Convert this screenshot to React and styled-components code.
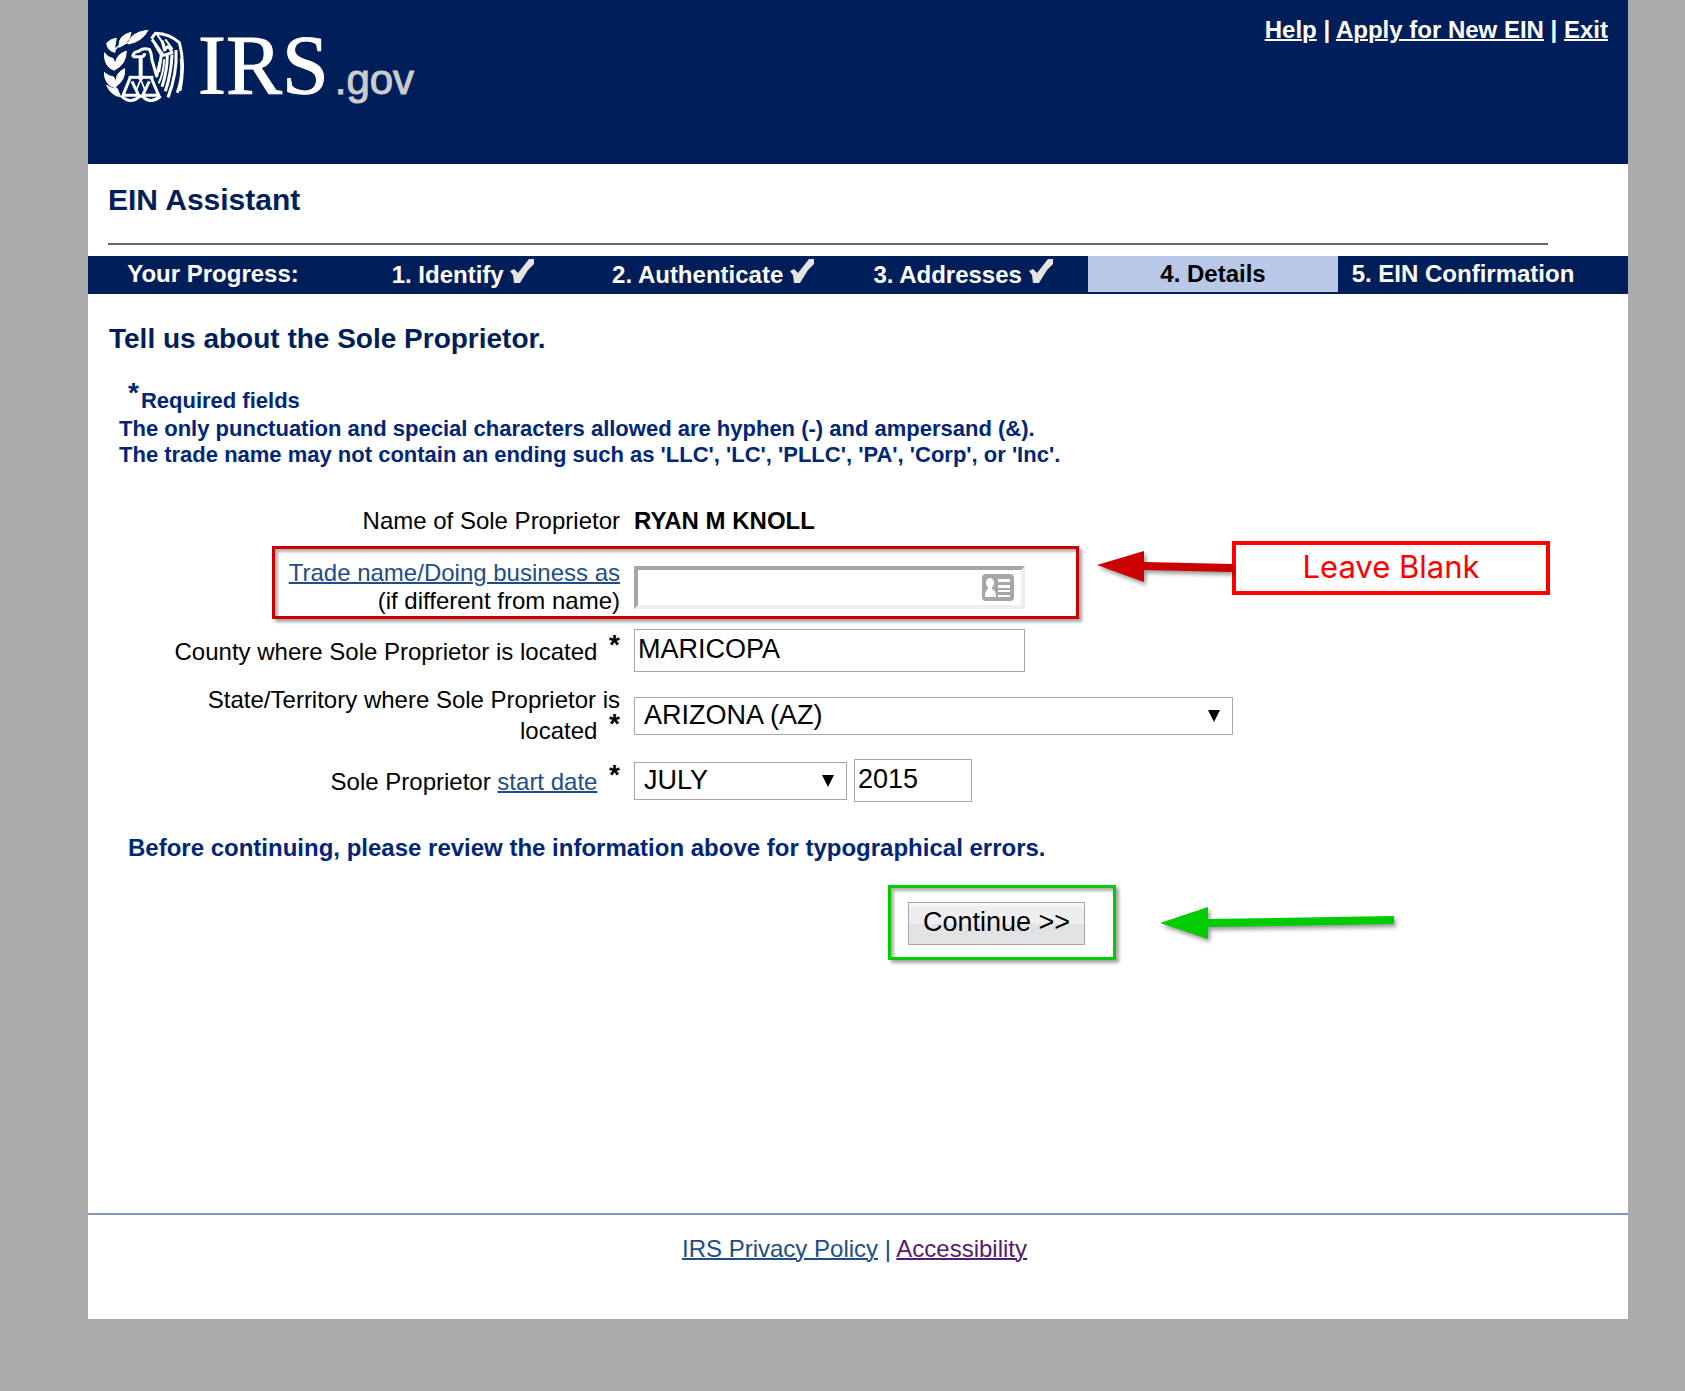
import styled, { createGlobalStyle } from "styled-components";

const NAVY = "#001e5a";
const TEXT_BLUE = "#00267a";
const LINK_BLUE = "#204d87";
const VISITED = "#551a72";
const RED = "#cc0000";
const GREEN = "#00cc00";

const GlobalStyle = createGlobalStyle`
    *, *::before, *::after {
        box-sizing: border-box;
    }

    body {
        margin: 0;
        background: #ababab;
        color: #000;
        font-family: "Liberation Sans", Arial, Helvetica, sans-serif;
        font-size: 24px;
        line-height: 28px;
    }
`

const Page = styled.div`
    margin: 0 57px 71px 88px;
    background: #fff;
`

const Header = styled.header`
    display: flex;
    justify-content: space-between;
    align-items: flex-start;
    min-height: 164px;
    padding: 0 20px 0 16px;
    background: ${NAVY};
    color: #fff;
`

const Logo = styled.a`
    display: flex;
    align-items: baseline;
    padding-top: 18px;
    color: #fff;
    text-decoration: none;
`

const Emblem = styled.svg`
    align-self: flex-start;
    width: 80px;
    height: 72px;
    margin: 12px 14px 0 0;
`

const LogoName = styled.span`
    font-family: "Liberation Serif", "Times New Roman", serif;
    font-size: 84px;
    line-height: 96px;
    -webkit-text-stroke: 1px #fff;
`

const LogoSuffix = styled.span`
    margin-left: 6px;
    color: #ccc;
    font-size: 42px;
    line-height: 48px;
    -webkit-text-stroke: 1px #ccc;
`

const TopLinks = styled.nav`
    padding-top: 16px;
    font-weight: 700;
`

const TextLink = styled.a`
    color: ${(props) => props.$color || LINK_BLUE};
    text-decoration: underline;
    text-decoration-thickness: 2px;
`

const PageTitle = styled.h1`
    margin: 0 80px 11px 20px;
    padding: 19px 0 26px;
    border-bottom: 2px solid #686868;
    color: ${NAVY};
    font-size: 30px;
    line-height: 34px;
`

const Progress = styled.ol`
    display: grid;
    grid-template-columns: repeat(6, 1fr);
    margin: 0;
    padding: 0 40px 0 0;
    list-style: none;
    background: ${NAVY};
    border-bottom: 2px solid ${NAVY};
`

const Step = styled.li`
    display: flex;
    align-items: center;
    justify-content: center;
    height: 36px;
    background: ${(props) => (props.$active ? "#bac8e8" : "transparent")};
    color: ${(props) => (props.$active ? "#000" : "#fff")};
    font-weight: 700;
    white-space: nowrap;
`

const CheckMark = styled.svg`
    width: 24px;
    height: 24px;
`

const SectionTitle = styled.h2`
    margin: 0;
    padding: 29px 20px 0 21px;
    color: ${NAVY};
    font-size: 28px;
    line-height: 32px;
`

const Notes = styled.div`
    padding: 28px 20px 39px 31px;
    color: ${TEXT_BLUE};
    font-size: 22px;
    font-weight: 700;
    line-height: 26px;
`

const NoteLine = styled.p`
    margin: 0;
    padding: ${(props) => (props.$required ? "0 0 2px 9px" : "0")};
`

const Star = styled.span`
    margin: ${(props) => (props.$spaced ? "0 0 0 5px" : "0 2px 0 0")};
    font-size: 28px;
    font-weight: 700;
    line-height: 20px;
    vertical-align: 6px;
`

const Form = styled.form`
    padding-left: 72px;
`

const Rows = styled.div`
    display: flex;
    flex-direction: column;
    gap: 14px;
`

const Row = styled.div`
    position: relative;
    display: grid;
    grid-template-columns: 460px 1fr;
    align-items: center;
    column-gap: 14px;
    padding-bottom: ${(props) => (props.$loose ? "10px" : "0")};
`

const Label = styled.label`
    text-align: right;
`

const Fields = styled.div`
    display: flex;
    align-items: center;
    gap: 7px;
`

const TextInput = styled.input`
    width: ${(props) => props.$width};
    height: 43px;
    padding: 0 3px 2px;
    border: 1px solid #a6a6a6;
    border-radius: 0;
    background: #fff;
    color: #000;
    font-family: inherit;
    font-size: 27px;
`

const InsetInput = styled(TextInput)`
    display: block;
    border: 4px solid;
    border-color: #a6a6a6 #eee #eee #a6a6a6;
    outline: none;
`

const InputWithIcon = styled.div`
    position: relative;
`

const CardIcon = styled.svg`
    position: absolute;
    top: 8px;
    right: 11px;
    width: 32px;
    height: 27px;
`

const SelectBox = styled.div`
    position: relative;
    width: ${(props) => props.$width};
`

const Select = styled.select`
    display: block;
    width: 100%;
    height: 38px;
    padding: 0 36px 2px 9px;
    appearance: none;
    border: 1px solid #a6a6a6;
    border-radius: 0;
    background: #fff;
    color: #000;
    font-family: inherit;
    font-size: 27px;
`

const SelectArrow = styled.svg`
    position: absolute;
    top: 13px;
    right: 13px;
    width: 12px;
    height: 12px;
    pointer-events: none;
`

const Review = styled.p`
    margin: 32px 0 40px -32px;
    color: ${TEXT_BLUE};
    font-weight: 700;
`

const Actions = styled.div`
    position: relative;
    width: max-content;
    margin-left: 748px;
`

const ContinueButton = styled.button`
    display: block;
    height: 43px;
    padding: 0 14px 3px;
    border: 1px solid #a6a6a6;
    border-radius: 0;
    background: linear-gradient(#fafafa 0 3px, #eeeeee 3px 50%, #e2e3e5 50%);
    color: #000;
    font-family: inherit;
    font-size: 27px;
`

// Frames and arrows that are laid over the form
const Highlight = styled.div`
    position: absolute;
    inset: ${(props) => props.$inset};
    width: ${(props) => props.$width};
    border: 3px solid ${(props) => props.$color};
    box-shadow: 3px 3px 3px rgba(0, 0, 0, 0.35), inset 3px 3px 3px rgba(0, 0, 0, 0.3);
    pointer-events: none;
`

const Callout = styled.div`
    position: absolute;
    top: -18px;
    left: 937px;
    display: flex;
    align-items: flex-start;
`

const CalloutText = styled.div`
    width: 318px;
    padding: 3px 0 5px;
    border: 4px solid #ff0000;
    background: #fff;
    color: #ff0000;
    font-family: Inter, "Liberation Sans", sans-serif;
    font-size: 31px;
    font-weight: 400;
    line-height: 38px;
    text-align: center;
`

const RedArrow = styled.svg`
    width: 135px;
    height: 54px;
    overflow: visible;
    filter: drop-shadow(2px 3px 2px rgba(0, 0, 0, 0.4));
`

const GreenArrow = styled.svg`
    position: absolute;
    top: 5px;
    left: 252px;
    width: 236px;
    height: 34px;
    overflow: visible;
    filter: drop-shadow(2px 3px 2px rgba(0, 0, 0, 0.4));
`

const Footer = styled.footer`
    margin-top: 268px;
    padding: 20px 7px 56px 0;
    border-top: 2px solid #8296b6;
    color: ${LINK_BLUE};
    text-align: center;
`

const EagleEmblem = () => (
    <Emblem viewBox="72 90 240 216" aria-hidden="true">
        <g fill="#fff" stroke="#fff" strokeWidth="3">
            <path d="M80 130 Q92 116 109 115 Q103 135 105 157 Q82 152 80 130Z" />
            <path d="M118 142 Q112 108 153 97 Q149 128 118 142Z" />
            <path d="M145 132 Q146 100 204 90 Q188 124 145 132Z" />
            <path d="M73 158 Q82 172 100 176 Q108 192 104 211 Q72 202 73 158Z" />
            <path d="M107 208 Q100 166 139 153 Q138 192 107 208Z" />
            <path d="M72 217 Q88 230 101 231 Q110 246 108 263 Q76 260 72 217Z" />
            <path d="M109 258 Q102 220 134 206 Q136 240 109 258Z" />
            <path d="M80 256 Q96 268 112 266 L122 290 Q94 288 80 256Z" />
        </g>
        <g fill="none" stroke="#fff" strokeWidth="9" strokeLinejoin="round">
            <path d="M104 150 L118 136 L150 126" strokeWidth="4" />
            <path d="M158 170 Q160 156 176 154 Q188 142 208 148 Q214 158 216 180 L230 228 L240 186" />
            <path d="M158 170 H184 Q194 170 194 160" />
            <path d="M182 172 V240" strokeWidth="12" />
            <path d="M146 232 H220" />
            <path d="M150 234 L129 286 H176 L156 244" />
            <path d="M214 234 L236 286 H188 L208 244" />
            <path d="M182 238 L170 268 M182 238 L194 268" strokeWidth="5" />
            <path d="M124 288 Q152 314 178 290 Q184 286 188 290 Q212 314 242 288" />
            <path d="M214 116 L226 100 Q270 102 298 128 Q316 190 300 272" />
            <path d="M216 118 L250 166 L276 158 Q270 142 262 140 L254 150 L246 122" />
            <path d="M230 102 L254 136 M256 118 L278 148" strokeWidth="6" />
            <path d="M226 134 L244 164 L236 216" />
            <path d="M262 164 Q262 212 246 260" />
            <path d="M276 164 Q274 220 256 274" />
            <path d="M288 150 Q292 220 264 292" />
            <path d="M304 176 Q310 230 292 278" />
            <path d="M252 178 Q252 216 236 250" strokeWidth="6" />
        </g>
    </Emblem>
)

const Check = () => (
    <CheckMark viewBox="0 0 24 24" role="img" aria-label="completed">
        <path d="M0 12 L4 10 L8 14 L19 0 H24 V5 L18 11 L10 24 H4 L3 16Z" fill="#e4e4e4" />
    </CheckMark>
)

const ContactCard = () => (
    <CardIcon viewBox="0 0 32 27" aria-hidden="true">
        <rect width="32" height="27" rx="4" fill="#a6a6a6" />
        <g fill="#fff">
            <ellipse cx="8" cy="9" rx="4" ry="5" />
            <path d="M6 12 H10 V15 Q14 16 14 23 H3 Q3 16 6 15Z" />
            <path d="M16 5 H28 V8 H16Z M16 11 H28 V14 H16Z M16 16 H28 V18 H16Z M16 21 H28 V23 H16Z" />
        </g>
    </CardIcon>
)

const DownArrow = () => (
    <SelectArrow viewBox="0 0 12 12" aria-hidden="true">
        <path d="M0 0 H12 L6 12Z" />
    </SelectArrow>
)

const steps = [
    { name: "1. Identify", done: true },
    { name: "2. Authenticate", done: true },
    { name: "3. Addresses", done: true },
    { name: "4. Details", active: true },
    { name: "5. EIN Confirmation" },
]

const App = () => {
    return (
        <>
            <GlobalStyle />
            <Page>
                <Header>
                    <Logo href="#home">
                        <EagleEmblem />
                        <LogoName>IRS</LogoName>
                        <LogoSuffix>.gov</LogoSuffix>
                    </Logo>
                    <TopLinks>
                        <TextLink $color="#fff" href="#help">Help</TextLink>
                        {" | "}
                        <TextLink $color="#fff" href="#apply">Apply for New EIN</TextLink>
                        {" | "}
                        <TextLink $color="#fff" href="#exit">Exit</TextLink>
                    </TopLinks>
                </Header>
                <main>
                    <PageTitle>EIN Assistant</PageTitle>
                    <Progress>
                        <Step>Your Progress:</Step>
                        {steps.map((step) => (
                            <Step key={step.name} $active={step.active} aria-current={step.active ? "step" : undefined}>
                                <span>
                                    {step.name}
                                    {step.done && <> <Check /></>}
                                </span>
                            </Step>
                        ))}
                    </Progress>
                    <SectionTitle>Tell us about the Sole Proprietor.</SectionTitle>
                    <Notes>
                        <NoteLine $required><Star>*</Star>Required fields</NoteLine>
                        <NoteLine>The only punctuation and special characters allowed are hyphen (-) and ampersand (&amp;).</NoteLine>
                        <NoteLine>The trade name may not contain an ending such as 'LLC', 'LC', 'PLLC', 'PA', 'Corp', or 'Inc'.</NoteLine>
                    </Notes>
                    <Form onSubmit={(e) => e.preventDefault()}>
                        <Rows>
                            <Row $loose>
                                <Label as="span">Name of Sole Proprietor</Label>
                                <strong>RYAN M KNOLL</strong>
                            </Row>
                            <Row>
                                <Label htmlFor="trade">
                                    <TextLink href="#trade-name">Trade name/Doing business as</TextLink>
                                    <br />
                                    (if different from name)
                                </Label>
                                <Fields>
                                    <InputWithIcon>
                                        <InsetInput id="trade" type="text" $width="391px" />
                                        <ContactCard />
                                    </InputWithIcon>
                                </Fields>
                                <Highlight $color={RED} $inset="-13px auto -4px 112px" $width="807px" />
                                <Callout>
                                    <RedArrow viewBox="0 0 135 54" aria-hidden="true">
                                        <path d="M0 24 L47 10 V21 L135 23 V31 L47 29 V41Z" fill={RED} />
                                    </RedArrow>
                                    <CalloutText>Leave Blank</CalloutText>
                                </Callout>
                            </Row>
                            <Row>
                                <Label htmlFor="county">
                                    County where Sole Proprietor is located <Star $spaced>*</Star>
                                </Label>
                                <Fields>
                                    <TextInput id="county" type="text" defaultValue="MARICOPA" $width="391px" />
                                </Fields>
                            </Row>
                            <Row>
                                <Label htmlFor="state">
                                    State/Territory where Sole Proprietor is located <Star $spaced>*</Star>
                                </Label>
                                <Fields>
                                    <SelectBox $width="599px">
                                        <Select id="state" defaultValue="AZ">
                                            <option value="AZ">ARIZONA (AZ)</option>
                                        </Select>
                                        <DownArrow />
                                    </SelectBox>
                                </Fields>
                            </Row>
                            <Row>
                                <Label htmlFor="month">
                                    Sole Proprietor <TextLink href="#start-date">start date</TextLink> <Star $spaced>*</Star>
                                </Label>
                                <Fields>
                                    <SelectBox $width="213px">
                                        <Select id="month" defaultValue="7">
                                            <option value="7">JULY</option>
                                        </Select>
                                        <DownArrow />
                                    </SelectBox>
                                    <TextInput type="text" aria-label="Start year" defaultValue="2015" $width="118px" />
                                </Fields>
                            </Row>
                        </Rows>
                        <Review>Before continuing, please review the information above for typographical errors.</Review>
                        <Actions>
                            <ContinueButton type="submit">Continue &gt;&gt;</ContinueButton>
                            <Highlight $color={GREEN} $inset="-17px auto -15px -20px" $width="228px" />
                            <GreenArrow viewBox="0 0 236 34" aria-hidden="true">
                                <path d="M0 16 L48 0 V12 L234 9 V17 L48 20 V32Z" fill={GREEN} />
                            </GreenArrow>
                        </Actions>
                    </Form>
                </main>
                <Footer>
                    <TextLink href="#privacy">IRS Privacy Policy</TextLink>
                    {" | "}
                    <TextLink $color={VISITED} href="#accessibility">Accessibility</TextLink>
                </Footer>
            </Page>
        </>
    )
}

export default App;
